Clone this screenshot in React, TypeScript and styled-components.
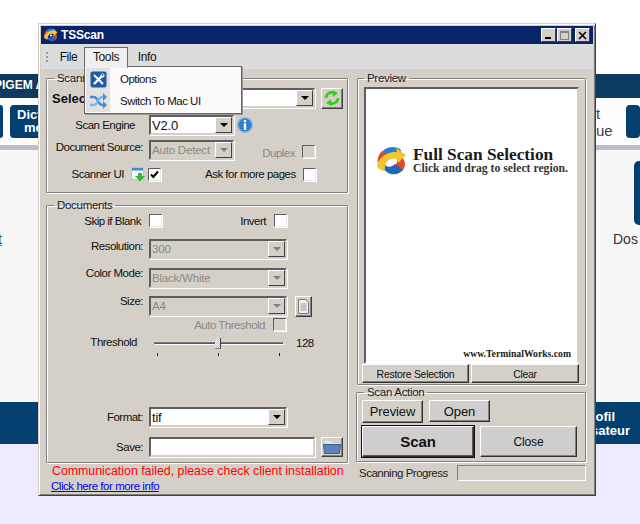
import React from "react";
import styled, { createGlobalStyle } from "styled-components";

const Global = createGlobalStyle`
  html, body { margin: 0; padding: 0; background: #fff; }
  body { font-family: "Liberation Sans", Arial, sans-serif; font-size: 11.5px; letter-spacing: -0.5px; color: #111; }
  * { box-sizing: border-box; }
`;

const Page = styled.div`
  position: relative;
  width: 640px;
  height: 524px;
  overflow: hidden;
  background: #fff;
  display: flex;
  flex-direction: column;
`;
const TopBlank = styled.div`height: 74px;`;
const HeadBand = styled.div`
  height: 24px;
  background: #0d3a61;
  color: #fff;
  font-weight: bold;
  font-size: 12px;
  letter-spacing: 0;
  line-height: 22px;
  white-space: nowrap;
  overflow: hidden;
  text-indent: -6px;
`;
const TileRow = styled.div`
  height: 47px;
  background: #fdfdfd;
  display: flex;
  align-items: flex-start;
  padding-top: 7px;
`;
const Tile = styled.div<{ $w: number; $ml?: number; $pad?: boolean }>`
  width: ${(p) => p.$w}px;
  height: 33px;
  margin-left: ${(p) => p.$ml ?? 0}px;
  background: #034070;
  border-radius: ${(p) => (p.$w < 10 ? "0 3px 3px 0" : "4px")};
  color: #fff;
  font-weight: bold;
  font-size: 13px;
  letter-spacing: 0;
  line-height: 13px;
  padding: ${(p) => (p.$pad ? "3px 0 0 7px" : "0")};
  flex: none;
  overflow: hidden;
`;
const TileCenterLine = styled.div`padding-left: 7px;`;
const Strip = styled.div`height: 5px; background: #b9bdd4;`;
const PageBody = styled.div`
  height: 252px;
  background: #f7f7f7;
  display: flex;
  justify-content: space-between;
  overflow: hidden;
`;
const LeftCut = styled.div`
  font-size: 14px;
  letter-spacing: 0;
  color: #333;
  margin-top: 81px;
  margin-left: -2px;
  text-decoration: underline;
  text-decoration-color: #1a5fd0;
`;
const RightCol = styled.div`
  width: 27px;
  padding-top: 11px;
  display: flex;
  flex-direction: column;
`;
const RightTile = styled.div`
  width: 6px;
  height: 64px;
  margin-left: 21px;
  background: #034070;
  border-radius: 5px 0 0 5px;
`;
const RightLabel = styled.div`
  font-size: 14px;
  letter-spacing: 0;
  color: #333;
  margin-top: 6px;
`;
const SideText = styled.div`
  width: 30px;
  margin-left: auto;
  font-size: 15px;
  letter-spacing: 0;
  line-height: 17px;
  color: #444;
`;
const FootBand = styled.div`
  height: 42px;
  background: #034070;
  color: #fff;
  font-weight: bold;
  font-size: 13px;
  letter-spacing: 0;
  line-height: 14px;
  padding: 8px 10px 0 0;
  text-align: right;
`;
const OfilLine = styled.div`padding-right: 15px;`;
const Lavender = styled.div`flex: 1; background: #eeeaff;`;

/* Window */
const Win = styled.div`
  position: absolute;
  left: 38px;
  top: 23px;
  width: 558px;
  height: 473px;
  background: #d4d0c8;
  border: 1px solid;
  border-color: #d4d0c8 #404040 #404040 #d4d0c8;
  box-shadow: inset 1px 1px 0 #fff, inset -1px -1px 0 #808080;
  padding: 2px;
  display: flex;
  flex-direction: column;
`;
const TitleBar = styled.div`
  height: 18px;
  background: #0a246a;
  color: #fff;
  font-weight: bold;
  font-size: 12px;
  letter-spacing: -0.2px;
  display: flex;
  align-items: center;
  padding: 0 3px 0 3px;
  flex: none;
`;
const TitleText = styled.span`margin-left: 3px; flex: 1;`;
const CapButton = styled.div<{ $ml?: number }>`
  width: 15px;
  height: 14px;
  margin-left: ${(p) => p.$ml ?? 0}px;
  background: #d4d0c8;
  border: 1px solid;
  border-color: #fff #404040 #404040 #fff;
  display: flex;
  align-items: center;
  justify-content: center;
`;
const MenuBar = styled.div`
  height: 25px;
  background: #dcdcdc;
  display: flex;
  align-items: flex-start;
  padding: 3px 0 0 5px;
  flex: none;
  font-size: 12px;
  letter-spacing: -0.4px;
`;
const Grip = styled.div`
  width: 2px;
  height: 11px;
  margin-top: 5px;
  background: repeating-linear-gradient(180deg, #999 0 2px, transparent 2px 4px);
`;
const MenuItem = styled.div<{ $w: number; $ml?: number; $active?: boolean }>`
  width: ${(p) => p.$w}px;
  margin-left: ${(p) => p.$ml ?? 0}px;
  height: 21px;
  line-height: 19px;
  text-align: center;
  border: 1px solid ${(p) => (p.$active ? "#6a6a6a" : "transparent")};
  border-bottom-color: transparent;
  background: ${(p) => (p.$active ? "#f0f0f0" : "transparent")};
  position: relative;
  z-index: 3;
`;
const Popup = styled.div`
  position: absolute;
  left: 45px;
  top: 42px;
  width: 158px;
  height: 48px;
  background: #fdfbfb;
  border: 1px solid #666;
  box-shadow: 1px 1px 0 #999;
  z-index: 2;
  display: flex;
  flex-direction: column;
  padding: 1px;
`;
const PopupRow = styled.div`
  height: 22px;
  display: flex;
  align-items: center;
`;
const PopupIcon = styled.div`
  width: 24px;
  height: 22px;
  background: #e4e2e0;
  display: flex;
  align-items: center;
  justify-content: center;
  flex: none;
`;
const PopupText = styled.span`margin-left: 10px;`;

const Body = styled.div`
  flex: 1;
  display: flex;
  padding: 2px 0 0 5px;
  gap: 9px;
  min-height: 0;
`;
const Column = styled.div<{ $w: number }>`
  width: ${(p) => p.$w}px;
  display: flex;
  flex-direction: column;
  flex: none;
`;
const Group = styled.fieldset<{ $h: number; $mt?: number; $ml?: number }>`
  height: ${(p) => p.$h}px;
  margin: ${(p) => p.$mt ?? 0}px 0 0 ${(p) => p.$ml ?? 0}px;
  padding: 0;
  min-width: 0;
  border: 1px solid #808080;
  border-radius: 1px;
  box-shadow: 1px 1px 0 #fff, inset 1px 1px 0 #fff;
  flex: none;
`;
const Legend = styled.legend<{ $ml?: number }>`
  margin-left: ${(p) => p.$ml ?? 7}px;
  padding: 0 3px;
  line-height: 14px;
  letter-spacing: -0.3px;
  color: #1a1a2a;
`;
const Row = styled.div<{ $h?: number; $mt?: number; $top?: boolean }>`
  display: flex;
  align-items: ${(p) => (p.$top ? "flex-start" : "center")};
  height: ${(p) => p.$h ?? 20}px;
  margin-top: ${(p) => p.$mt ?? 0}px;
`;
const Label = styled.div<{ $pr?: number; $w?: number; $dis?: boolean; $lift?: number }>`
  width: ${(p) => p.$w ?? 102}px;
  padding-right: ${(p) => p.$pr ?? 6}px;
  margin-bottom: ${(p) => (p.$lift ?? 0) * 2}px;
  text-align: right;
  white-space: nowrap;
  flex: none;
  color: ${(p) => (p.$dis ? "#8a8a86" : "#111")};
`;
const BoldLabel = styled.div`
  margin-left: 5px;
  width: 97px;
  font-weight: bold;
  font-size: 13px;
  letter-spacing: 0;
  flex: none;
`;
const Combo = styled.div<{ $w: number; $dis?: boolean }>`
  width: ${(p) => p.$w}px;
  height: 20px;
  flex: none;
  border: 2px solid;
  border-color: #5e5e5e #d4d0c8 #d4d0c8 #5e5e5e;
  box-shadow: 1px 1px 0 #fff;
  background: ${(p) => (p.$dis ? "#d4d0c8" : "#fff")};
  color: ${(p) => (p.$dis ? "#8a8a86" : "#111")};
  display: flex;
  align-items: center;
  padding-left: 1px;
`;
const ComboText = styled.span<{ $big?: boolean }>`
  flex: 1;
  font-size: ${(p) => (p.$big ? "13px" : "11.5px")};
  letter-spacing: -0.2px;
`;
const Drop = styled.div<{ $dis?: boolean }>`
  width: 17px;
  height: 16px;
  background: #d4d0c8;
  border: 1px solid;
  border-color: #fff #404040 #404040 #fff;
  display: flex;
  align-items: center;
  justify-content: center;
  &::after {
    content: "";
    border-left: 4px solid transparent;
    border-right: 4px solid transparent;
    border-top: 4px solid ${(p) => (p.$dis ? "#808080" : "#000")};
  }
`;
const Check = styled.div<{ $ml?: number; $mt?: number; $dis?: boolean }>`
  width: 13px;
  height: 13px;
  flex: none;
  margin-left: ${(p) => p.$ml ?? 0}px;
  margin-top: ${(p) => p.$mt ?? 0}px;
  background: ${(p) => (p.$dis ? "#d4d0c8" : "#fff")};
  border: 1px solid;
  border-color: #5e5e5e #e8e8e8 #e8e8e8 #5e5e5e;
  box-shadow: 1px 1px 0 #fff;
  display: flex;
  align-items: center;
  justify-content: center;
`;
const Tool = styled.div<{ $w: number; $h: number; $ml?: number }>`
  width: ${(p) => p.$w}px;
  height: ${(p) => p.$h}px;
  margin-left: ${(p) => p.$ml ?? 0}px;
  background: #d4d0c8;
  border: 1px solid;
  border-color: #fff #404040 #404040 #fff;
  box-shadow: inset -1px -1px 0 #808080;
  display: flex;
  align-items: center;
  justify-content: center;
  flex: none;
`;
const InlineText = styled.span<{ $ml?: number; $w?: number; $mt?: number; $dis?: boolean }>`
  margin-left: ${(p) => p.$ml ?? 0}px;
  margin-top: ${(p) => p.$mt ?? 0}px;
  width: ${(p) => (p.$w ? p.$w + "px" : "auto")};
  text-align: right;
  white-space: nowrap;
  color: ${(p) => (p.$dis ? "#8a8a86" : "#111")};
  flex: none;
`;
const IconSlot = styled.div<{ $ml?: number }>`
  margin-left: ${(p) => p.$ml ?? 0}px;
  display: flex;
  flex: none;
`;
const SliderBox = styled.div`
  position: relative;
  width: 130px;
  height: 21px;
  margin-left: 5px;
  flex: none;
`;
const Track = styled.div`
  position: absolute;
  left: 0;
  right: 0;
  top: 6px;
  height: 3px;
  border: 1px solid;
  border-color: #808080 #fff #fff #808080;
  background: #555;
`;
const Thumb = styled.div`
  position: absolute;
  left: 61px;
  top: 2px;
  width: 6px;
  height: 11px;
  background: repeating-conic-gradient(#fff 0 25%, #bbb 0 50%) 0 0 / 2px 2px;
  border-right: 1px solid #404040;
  border-bottom: 1px solid #808080;
`;
const TickMark = styled.div<{ $x: number }>`
  position: absolute;
  left: ${(p) => p.$x}px;
  top: 17px;
  width: 1px;
  height: 3px;
  background: #222;
`;
const Msg = styled.div`
  margin: 1px 0 0 6px;
  font-size: 12.35px;
  letter-spacing: 0;
  line-height: 15px;
  color: #f00;
  white-space: nowrap;
`;
const Link = styled.a`
  margin: 0 0 0 5px;
  line-height: 14px;
  color: #00f;
  text-decoration: underline;
  white-space: nowrap;
  letter-spacing: -0.45px;
`;
const Viewer = styled.div`
  width: 215px;
  height: 277px;
  margin: 2px 0 0 6px;
  background: #fff;
  border: 2px solid;
  border-color: #5e5e5e #d4d0c8 transparent #5e5e5e;
  position: relative;
  display: flex;
  flex-direction: column;
  font-family: "Liberation Serif", "Times New Roman", serif;
  letter-spacing: 0;
  color: #1a1a1a;
  font-weight: bold;
`;
const Splash = styled.div`
  display: flex;
  align-items: center;
  margin: 57px 0 0 11px;
  gap: 6px;
`;
const SplashTitle = styled.div`
  font-size: 17.3px;
  line-height: 16px;
  white-space: nowrap;
`;
const SplashSub = styled.div`
  font-size: 11.7px;
  line-height: 12px;
  white-space: nowrap;
  color: #333;
`;
const Url = styled.div`
  margin-top: auto;
  margin-bottom: 3px;
  padding-right: 6px;
  text-align: right;
  font-size: 9.7px;
  line-height: 11px;
`;
const ButtonRow = styled.div<{ $gap: number; $mt?: number; $ml?: number }>`
  display: flex;
  gap: ${(p) => p.$gap}px;
  margin: ${(p) => p.$mt ?? 0}px 0 0 ${(p) => p.$ml ?? 4}px;
  align-items: flex-start;
`;
const Btn = styled.div<{ $w: number; $h: number; $size?: number; $bold?: boolean; $strong?: boolean; $bg?: string; $ls?: number }>`
  width: ${(p) => p.$w}px;
  height: ${(p) => p.$h}px;
  background: ${(p) => p.$bg ?? "#d4d0c8"};
  border: 1px solid;
  border-color: #fff #303030 #303030 #fff;
  box-shadow: ${(p) =>
    p.$strong
      ? "0 0 0 1px #111, inset -1px -1px 0 #555"
      : "inset -1px -1px 0 #808080"};
  display: flex;
  align-items: center;
  justify-content: center;
  font-size: ${(p) => p.$size ?? 12}px;
  font-weight: ${(p) => (p.$bold ? "bold" : "normal")};
  letter-spacing: ${(p) => p.$ls ?? -0.1}px;
  flex: none;
`;
const ProgressRow = styled.div`
  display: flex;
  align-items: center;
  height: 18px;
  margin: 2px 0 0 2px;
`;
const ProgressText = styled.span`
  width: 99px;
  white-space: nowrap;
  color: #222;
`;
const ProgressBar = styled.div`
  width: 130px;
  height: 16px;
  border: 1px solid;
  border-color: #808080 #fff #fff #808080;
`;

const Logo = ({ size }: { size: number }) => (
  <svg width={size} height={size} viewBox="0 0 30 30" style={{ flex: "none" }}>
    <path d="M5 6 C9 1 18 -1 24 4 L24 9 C18 7 11 8 7 13 Z" fill="#2a7fcc" />
    <path d="M5 5 C1 9 0 14 1 17 L8 23 C6 17 7 13 11 9 Z" fill="#e2452a" />
    <path d="M25 11 C29 16 29 21 25 25 L17 20 C20 18 21 15 20 12 Z" fill="#e4472c" />
    <path d="M6 22 C11 30 21 30 26 24 L18 18 C15 21 11 22 8 19 Z" fill="#2268ba" />
    <path d="M0 19 C2 11 11 5 20 6 L19 2 L29 9 L21 17 L20.500 13 C14 11 8 15 8 22 C8 24 7 25 7 25 C3 24 0 22 0 19 Z" fill="#f4c531" />
    <circle cx="15" cy="16" r="2.200" fill="#fff" />
  </svg>
);

const ToolsIcon = () => (
  <svg width="17" height="17" viewBox="0 0 17 17">
    <rect x="0.5" y="0.5" width="16" height="16" rx="2" fill="#1b5fa0" />
    <path d="M4 4 L13 13" stroke="#fff" strokeWidth="2" />
    <path d="M13 4 L4 13" stroke="#fff" strokeWidth="2.400" />
    <circle cx="12.500" cy="4.500" r="2" fill="#fff" />
    <circle cx="12.500" cy="4" r="1" fill="#1b5fa0" />
  </svg>
);
const SwitchIcon = () => (
  <svg width="18" height="16" viewBox="0 0 18 16">
    <path d="M1 4 H5 C9 4 9 12 13 12 H15" fill="none" stroke="#3f8fdc" strokeWidth="2.400" />
    <path d="M1 12 H5 C9 12 9 4 13 4 H15" fill="none" stroke="#7ab6ec" strokeWidth="2.400" />
    <path d="M14 0 L18 4 L14 8 Z" fill="#3f8fdc" />
    <path d="M14 8 L18 12 L14 16 Z" fill="#3f8fdc" />
  </svg>
);
const TickIcon = () => (
  <svg width="9" height="9" viewBox="0 0 9 9">
    <path d="M1 4.500 L3.300 7 L8 1.500" fill="none" stroke="#000" strokeWidth="2" />
  </svg>
);
const RefreshIcon = () => (
  <svg width="18" height="18" viewBox="0 0 18 18">
    <path d="M3 9 C3 5 7 2.500 11 4" fill="none" stroke="#36d01a" strokeWidth="2.800" />
    <path d="M9.500 1 L15 4 L10 8 Z" fill="#36d01a" />
    <path d="M15 9 C15 13 11 15.500 7 14" fill="none" stroke="#36d01a" strokeWidth="2.800" />
    <path d="M8.500 17 L3 14 L8 10 Z" fill="#36d01a" />
  </svg>
);
const InfoIcon = () => (
  <svg width="16" height="16" viewBox="0 0 16 16">
    <circle cx="8" cy="8" r="8" fill="#86b4e0" />
    <circle cx="8" cy="8" r="6.500" fill="#2f7fd0" />
    <rect x="6.800" y="3" width="2.400" height="2.200" fill="#fff" />
    <rect x="6.800" y="6.300" width="2.400" height="6.700" fill="#fff" />
  </svg>
);
const ScannerUiIcon = () => (
  <svg width="15" height="15" viewBox="0 0 15 15">
    <rect x="0.5" y="0.5" width="12" height="12" fill="#f4f8fc" stroke="#b8c4d0" />
    <rect x="1" y="1" width="11" height="2.500" fill="#3c8ad8" />
    <path d="M7 6 H11 V9 H14 L9 14.500 L4 9 H7 Z" fill="#37b52d" />
  </svg>
);
const DocIcon = () => (
  <svg width="11" height="15" viewBox="0 0 11 15">
    <path d="M0.5 0.5 H7.500 L10.500 3.500 V14.500 H0.5 Z" fill="#f0f0f0" stroke="#777" />
    <path d="M2.500 5 H8.500 M2.500 7 H8.500 M2.500 9 H8.500 M2.500 11 H8.500" stroke="#999" />
  </svg>
);
const FolderIcon = () => (
  <svg width="18" height="14" viewBox="0 0 18 14">
    <path d="M2 1 H8 L9 3 H15 V5 H2 Z" fill="#dfe6f0" />
    <path d="M0.5 4.500 H17.500 L16.500 13.500 H1.500 Z" fill="#5c82ba" stroke="#3e5f92" />
  </svg>
);

const Combobox = ({ w, text, dis, big }: { w: number; text?: string; dis?: boolean; big?: boolean }) => (
  <Combo $w={w} $dis={dis}>
    <ComboText $big={big}>{text}</ComboText>
    <Drop $dis={dis} />
  </Combo>
);

export default function App() {
  return (
    <Page>
      <Global />
      <TopBlank />
      <HeadBand>PIGEM A</HeadBand>
      <TileRow>
        <Tile $w={3} />
        <Tile $w={90} $ml={7} $pad>
          Dict
          <TileCenterLine>mé</TileCenterLine>
        </Tile>
        <SideText>
          t
          <br />
          ue
        </SideText>
        <Tile $w={14} />
      </TileRow>
      <Strip />
      <PageBody>
        <LeftCut>t</LeftCut>
        <RightCol>
          <RightTile />
          <RightLabel>Dos</RightLabel>
        </RightCol>
      </PageBody>
      <FootBand>
        <OfilLine>ofil</OfilLine>
        sateur
      </FootBand>
      <Lavender />

      <Win>
        <TitleBar>
          <Logo size={14} />
          <TitleText>TSScan</TitleText>
          <CapButton>
            <svg width="9" height="9" viewBox="0 0 9 9">
              <rect x="1" y="6" width="6" height="2" fill="#000" />
            </svg>
          </CapButton>
          <CapButton $ml={1}>
            <svg width="9" height="9" viewBox="0 0 9 9">
              <rect x="0.5" y="0.5" width="8" height="8" fill="none" stroke="#808080" />
              <rect x="0" y="0" width="9" height="2" fill="#808080" />
            </svg>
          </CapButton>
          <CapButton $ml={3}>
            <svg width="9" height="9" viewBox="0 0 9 9">
              <path d="M1 1 L8 8 M8 1 L1 8" stroke="#000" strokeWidth="1.600" />
            </svg>
          </CapButton>
        </TitleBar>
        <MenuBar>
          <Grip />
          <MenuItem $w={31} $ml={5}>File</MenuItem>
          <MenuItem $w={44} $active>Tools</MenuItem>
          <MenuItem $w={38}>Info</MenuItem>
        </MenuBar>
        <Popup>
          <PopupRow>
            <PopupIcon>
              <ToolsIcon />
            </PopupIcon>
            <PopupText>Options</PopupText>
          </PopupRow>
          <PopupRow>
            <PopupIcon>
              <SwitchIcon />
            </PopupIcon>
            <PopupText>Switch To Mac UI</PopupText>
          </PopupRow>
        </Popup>

        <Body>
          <Column $w={302}>
            <Group $h={122}>
              <Legend>Scanner</Legend>
              <Row $mt={3}>
                <BoldLabel>Select</BoldLabel>
                <Combobox w={166} />
                <Tool $w={22} $h={21} $ml={6}>
                  <RefreshIcon />
                </Tool>
              </Row>
              <Row $mt={7}>
                <Label $pr={14}>Scan Engine</Label>
                <Combobox w={85} text="V2.0" big />
                <IconSlot $ml={3}>
                  <InfoIcon />
                </IconSlot>
              </Row>
              <Row $mt={5}>
                <Label $lift={3}>Document Source:</Label>
                <Combobox w={85} text="Auto Detect" dis />
                <InlineText $ml={28} $w={33} $mt={6} $dis>Duplex</InlineText>
                <Check $ml={7} $mt={2} $dis />
              </Row>
              <Row $mt={7} $h={14}>
                <Label $w={84} $pr={7}>Scanner UI</Label>
                <IconSlot>
                  <ScannerUiIcon />
                </IconSlot>
                <Check $ml={2}>
                  <TickIcon />
                </Check>
                <InlineText $ml={44} $w={90}>Ask for more pages</InlineText>
                <Check $ml={8} />
              </Row>
            </Group>
            <Group $h={265} $mt={5}>
              <Legend>Documents</Legend>
              <Row $mt={2} $h={13}>
                <Label $pr={8}>Skip if Blank</Label>
                <Check />
                <InlineText $ml={78} $w={26}>Invert</InlineText>
                <Check $ml={8} />
              </Row>
              <Row $mt={12}>
                <Label $lift={3}>Resolution:</Label>
                <Combobox w={138} text="300" dis />
              </Row>
              <Row $mt={9}>
                <Label $lift={5}>Color Mode:</Label>
                <Combobox w={138} text="Black/White" dis />
              </Row>
              <Row $mt={8}>
                <Label $lift={5}>Size:</Label>
                <Combobox w={138} text="A4" dis />
                <Tool $w={17} $h={21} $ml={8}>
                  <DocIcon />
                </Tool>
              </Row>
              <Row $mt={2} $h={13}>
                <Label $w={226} $pr={8} $dis>Auto Threshold</Label>
                <Check $dis />
              </Row>
              <Row $mt={5} $h={21} $top>
                <Label $pr={12}>Threshold</Label>
                <SliderBox>
                  <Track />
                  <Thumb />
                  <TickMark $x={3} />
                  <TickMark $x={64} />
                  <TickMark $x={125} />
                </SliderBox>
                <InlineText $ml={12} $mt={1}>128</InlineText>
              </Row>
              <Row $mt={50}>
                <Label>Format:</Label>
                <Combobox w={138} text="tif" big />
              </Row>
              <Row $mt={10}>
                <Label>Save:</Label>
                <Combo $w={166} />
                <Tool $w={22} $h={20} $ml={6}>
                  <FolderIcon />
                </Tool>
              </Row>
            </Group>
            <Msg>Communication failed, please check client installation</Msg>
            <Link>Click here for more info</Link>
          </Column>

          <Column $w={229}>
            <Group $h={314}>
              <Legend $ml={6}>Preview</Legend>
              <Viewer>
                <Splash>
                  <Logo size={30} />
                  <div>
                    <SplashTitle>Full Scan Selection</SplashTitle>
                    <SplashSub>Click and drag to select region.</SplashSub>
                  </div>
                </Splash>
                <Url>www.TerminalWorks.com</Url>
              </Viewer>
              <ButtonRow $gap={2}>
                <Btn $w={107} $h={19} $size={10.5} $ls={-0.3}>Restore Selection</Btn>
                <Btn $w={108} $h={19} $size={10.5} $ls={-0.3}>Clear</Btn>
              </ButtonRow>
            </Group>
            <Group $h={77} $ml={-1}>
              <Legend>Scan Action</Legend>
              <ButtonRow $gap={6} $mt={1} $ml={5}>
                <Btn $w={61} $h={23} $size={13}>Preview</Btn>
                <Btn $w={61} $h={22} $size={13} $bg="#d0cdcd">Open</Btn>
              </ButtonRow>
              <ButtonRow $gap={6} $mt={3} $ml={5}>
                <Btn $w={112} $h={31} $size={15} $bold $strong $bg="#d0cdcd">Scan</Btn>
                <Btn $w={97} $h={31} $bg="#d0cdcd">Close</Btn>
              </ButtonRow>
            </Group>
            <ProgressRow>
              <ProgressText>Scanning Progress</ProgressText>
              <ProgressBar />
            </ProgressRow>
          </Column>
        </Body>
      </Win>
    </Page>
  );
}
